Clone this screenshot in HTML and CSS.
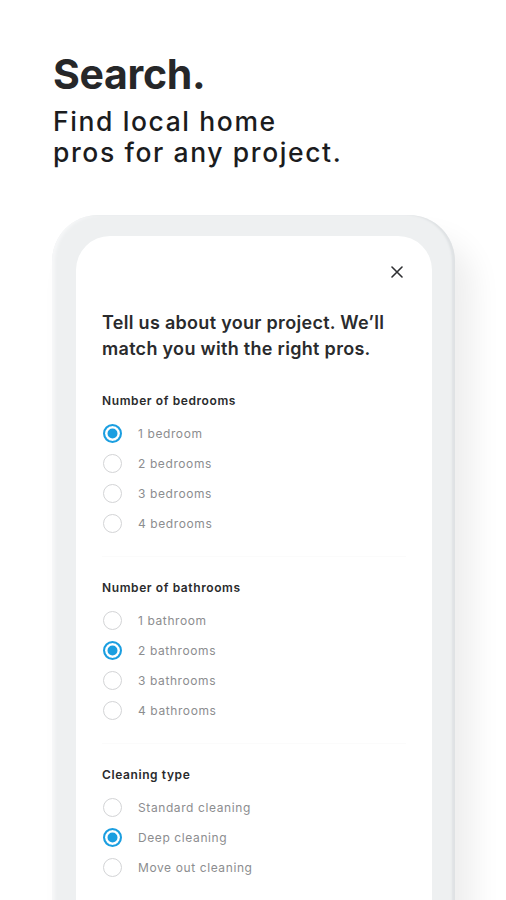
FILE: index.html
```
<!DOCTYPE html>
<html lang="en">

<head>
  <meta charset="UTF-8">
  <meta name="viewport" content="width=device-width, initial-scale=1.0">
  <title>Search</title>

  <link rel="stylesheet" href="styles.css">

</head>

<body>

  <div id="intro">
    <div id="mainText">Search.</div>
    <div id="subText">Find local home<br>pros for any project.</div>
  </div>

  <div id="phone">
    <div id="screen">
      <div class="closeRow">
        <svg class="closeIcon" width="12" height="12" viewBox="0 0 12 12">
          <path d="M1 1 L11 11 M11 1 L1 11" stroke="#2f3033" stroke-width="1.6" stroke-linecap="round" />
        </svg>
      </div>

      <div id="question">Tell us about your project. We’ll match you with the right pros.</div>

      <!-- bedrooms -->
      <div class="group">
        <div class="groupTitle">Number of bedrooms</div>
        <div class="option"><span class="radio checked"></span>1 bedroom</div>
        <div class="option"><span class="radio"></span>2 bedrooms</div>
        <div class="option"><span class="radio"></span>3 bedrooms</div>
        <div class="option"><span class="radio"></span>4 bedrooms</div>
      </div>

      <!-- bathrooms -->
      <div class="group">
        <div class="groupTitle">Number of bathrooms</div>
        <div class="option"><span class="radio"></span>1 bathroom</div>
        <div class="option"><span class="radio checked"></span>2 bathrooms</div>
        <div class="option"><span class="radio"></span>3 bathrooms</div>
        <div class="option"><span class="radio"></span>4 bathrooms</div>
      </div>

      <!-- cleaning -->
      <div class="group">
        <div class="groupTitle">Cleaning type</div>
        <div class="option"><span class="radio"></span>Standard cleaning</div>
        <div class="option"><span class="radio checked"></span>Deep cleaning</div>
        <div class="option"><span class="radio"></span>Move out cleaning</div>
      </div>
    </div>
  </div>

</body>

</html>
```

FILE: styles.css
```
body {
  margin: 0;
  height: 900px;
  overflow: hidden;
  background-color: white;
  font-family: "Inter", "Liberation Sans", sans-serif;
  color: #222325;
}

/* intro */
#intro {
  padding-top: 49px;
  padding-left: 53px;
}

#mainText {
  font-size: 41px;
  font-weight: 700;
  line-height: 50px;
  letter-spacing: -0.3px;
  color: #262729;
}

#subText {
  margin-top: 7px;
  font-size: 26.5px;
  font-weight: 550;
  line-height: 31px;
  letter-spacing: 1.6px;
  color: #1b1c1e;
}

/* phone */
#phone {
  margin-top: 47px;
  margin-left: 52px;
  width: 356px;
  height: 700px;
  padding: 21px 23px 0 24px;
  border-radius: 46px 46px 0 0;
  background-color: #eef0f1;
  box-shadow: inset -3px 0 2px #dfe2e4, inset 3px 0 3px #f6f7f8, 18px 24px 30px rgba(0, 0, 0, 0.07);
}

#screen {
  height: 100%;
  padding: 0 26px;
  border-radius: 34px 34px 0 0;
  background-color: white;
}

.closeRow {
  display: flex;
  justify-content: flex-end;
  padding-top: 30px;
  padding-right: 3px;
}

#question {
  margin-top: 32px;
  margin-bottom: 8px;
  font-size: 18px;
  font-weight: 600;
  line-height: 26px;
  letter-spacing: 0.3px;
  color: #2a2b2d;
}

.group {
  padding-top: 22px;
  padding-bottom: 18px;
  border-bottom: 1px solid #fbfbfb;
}

.groupTitle {
  margin-bottom: 8px;
  font-size: 12px;
  font-weight: 600;
  line-height: 18px;
  letter-spacing: 0.6px;
  color: #2a2b2d;
}

.option {
  display: flex;
  align-items: center;
  height: 30px;
  font-size: 12px;
  letter-spacing: 0.6px;
  color: #8c8d8f;
}

.radio {
  box-sizing: border-box;
  width: 19px;
  height: 19px;
  margin-left: 1px;
  margin-right: 16px;
  border: 1.5px solid #d3d4d6;
  border-radius: 50%;
  background-color: white;
}

.radio.checked {
  border: 2px solid #1a9ee0;
  box-shadow: inset 0 0 0 2.5px white, inset 0 0 0 8px #1a9ee0;
}
```
